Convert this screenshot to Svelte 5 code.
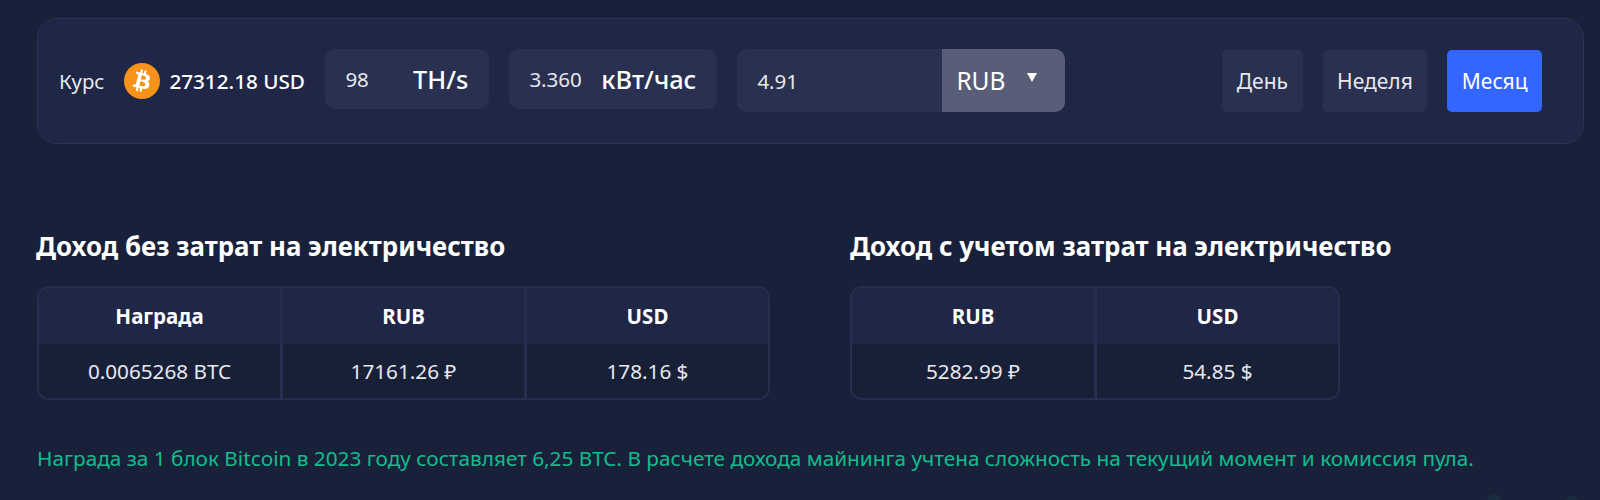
<script>
let period = 'Месяц';
const periods = ['День', 'Неделя', 'Месяц'];

const noPower = {
  heads: ['Награда', 'RUB', 'USD'],
  cells: ['0.0065268 BTC', '17161.26 ₽', '178.16 $'],
};
const withPower = {
  heads: ['RUB', 'USD'],
  cells: ['5282.99 ₽', '54.85 $'],
};
</script>

<main class="page">
  <section class="panel">
    <span class="rate-label">Курс</span>
    <svg class="btc" viewBox="0 0 24 24" aria-hidden="true">
      <circle cx="12" cy="12" r="12" fill="#f7931a" />
      <path
        fill="#fff"
        d="M17.23 10.29c.24-1.59-.974-2.45-2.64-3.03l.54-2.153-1.315-.33-.525 2.107c-.345-.087-.705-.167-1.064-.25l.526-2.127-1.32-.33-.54 2.165c-.285-.067-.565-.132-.84-.2l-1.815-.45-.35 1.407s.975.225.955.236c.535.136.63.486.615.766l-1.477 5.92c-.075.166-.24.406-.614.314.015.02-.96-.24-.96-.24l-.66 1.51 1.71.426.93.242-.54 2.19 1.32.327.54-2.17c.36.1.705.19 1.05.273l-.51 2.154 1.32.33.545-2.19c2.24.427 3.93.257 4.64-1.774.57-1.637-.03-2.58-1.217-3.196.854-.193 1.5-.76 1.68-1.93h.01zm-3.01 4.22c-.404 1.64-3.157.75-4.05.53l.72-2.9c.896.23 3.757.67 3.33 2.37zm.41-4.24c-.37 1.49-2.662.735-3.405.55l.654-2.64c.744.18 3.137.524 2.75 2.084v.006z"
      />
    </svg>
    <span class="rate-value">27312.18 USD</span>

    <div class="field hash">
      <span class="value">98</span>
      <span class="unit">TH/s</span>
    </div>
    <div class="field power">
      <span class="value">3.360</span>
      <span class="unit">кВт/час</span>
    </div>
    <div class="field price">
      <span class="value">4.91</span>
      <div class="currency">
        <span>RUB</span>
        <i class="caret"></i>
      </div>
    </div>

    <div class="periods">
      {#each periods as p}
        <button class="period" class:active={period === p} on:click={() => (period = p)}>{p}</button>
      {/each}
    </div>
  </section>

  <section class="results">
    <div class="result first">
      <h2>Доход без затрат на электричество</h2>
      <div class="table cols3">
        {#each noPower.heads as h, i}<div class="head" class:divided={i > 0}>{h}</div>{/each}
        {#each noPower.cells as c, i}<div class="cell" class:divided={i > 0}>{c}</div>{/each}
      </div>
    </div>
    <div class="result">
      <h2>Доход с учетом затрат на электричество</h2>
      <div class="table cols2">
        {#each withPower.heads as h, i}<div class="head" class:divided={i > 0}>{h}</div>{/each}
        {#each withPower.cells as c, i}<div class="cell" class:divided={i > 0}>{c}</div>{/each}
      </div>
    </div>
  </section>

  <p class="note">Награда за 1 блок Bitcoin в 2023 году составляет 6,25 BTC. В расчете дохода майнинга учтена сложность на текущий момент и комиссия пула.</p>
</main>

<!-- chat widget cut off by the bottom edge -->
<div class="widget">
  <span class="dot"></span>
  <span class="dot low"></span>
</div>

<style>
  :global(body) {
    background: #19213a;
  }

  .page {
    box-sizing: border-box;
    height: 500px;
    overflow: hidden;
    padding: 18px 16px 0 37px;
    font-family: "Noto Sans", "Open Sans", sans-serif;
    color: #fff;
  }

  .panel {
    box-sizing: border-box;
    height: 126px;
    display: flex;
    align-items: flex-start;
    padding: 30px 41px 0 21px;
    background: #1f2646;
    border: 1px solid #2b3452;
    border-radius: 20px;
  }

  .rate-label {
    margin-top: 20px;
    font-size: 20.4px;
    line-height: 24px;
    color: #e6e8ee;
  }

  .btc {
    width: 36px;
    height: 36px;
    margin: 14px 0 0 20px;
  }

  .rate-value {
    margin: 20px 0 0 9px;
    width: 156px;
    font-size: 20.7px;
    line-height: 24px;
    font-weight: 500;
    white-space: nowrap;
  }

  .field {
    box-sizing: border-box;
    height: 60px;
    display: flex;
    align-items: center;
    background: #2a3150;
    border-radius: 10px;
    margin-right: 20px;
  }

  .hash {
    width: 164px;
    padding: 0 21px 0 20px;
    justify-content: space-between;
  }

  .power {
    width: 208px;
    padding: 0 21px 0 20px;
    justify-content: space-between;
  }

  .price {
    width: 328px;
    height: 63px;
    padding-left: 20px;
    justify-content: space-between;
    margin-right: 0;
    overflow: hidden;
  }

  .value {
    font-size: 20.5px;
    color: #e6e8ee;
  }

  .unit {
    font-size: 25.4px;
    font-weight: 500;
  }

  .currency {
    width: 123px;
    height: 100%;
    display: flex;
    align-items: center;
    gap: 22px;
    padding-left: 14px;
    box-sizing: border-box;
    background: #585e78;
    font-size: 24.5px;
  }

  .caret {
    width: 0;
    height: 0;
    margin-top: -6px;
    border-left: 5px solid transparent;
    border-right: 5px solid transparent;
    border-top: 9px solid #fff;
  }

  .periods {
    display: flex;
    gap: 20px;
    margin-left: auto;
    margin-top: 1px;
  }

  .period {
    height: 62px;
    padding: 0 14.5px;
    border: 0;
    border-radius: 5px;
    background: #2a3150;
    color: #e6e8ee;
    font: 21px "Noto Sans", "Open Sans", sans-serif;
  }

  .period.active {
    background: #3366ff;
    color: #fff;
  }

  .results {
    display: flex;
    margin-top: 81px;
  }

  .result.first {
    width: 813px;
  }

  h2 {
    margin: 0 0 19px;
    font-size: 25.85px;
    line-height: 42px;
    font-weight: 700;
    white-space: nowrap;
  }

  .first h2 {
    margin-left: -1px;
  }

  .table {
    display: grid;
    grid-template-rows: 56px 54px;
    border: 2px solid #262f4e;
    border-radius: 12px;
    overflow: hidden;
    box-sizing: border-box;
    height: 114px;
  }

  .cols3 {
    width: 733px;
    grid-template-columns: 241px 244px 1fr;
  }

  .cols2 {
    width: 490px;
    grid-template-columns: 242px 1fr;
  }

  .head,
  .cell {
    display: flex;
    align-items: center;
    justify-content: center;
    font-size: 20.7px;
  }

  .divided {
    border-left: 3px solid #262f4e;
  }

  .head {
    background: #1f2646;
    font-weight: 700;
    font-size: 20.5px;
  }

  .cell {
    background: #182037;
    color: #e6e8ee;
  }

  .note {
    margin: 45px 0 0;
    font-size: 20.75px;
    line-height: 26px;
    white-space: nowrap;
    color: #12bd8c;
  }

  .widget {
    position: fixed;
    right: 21px;
    bottom: -6px;
    width: 92px;
    height: 12px;
    display: flex;
    justify-content: space-between;
  }

  .dot {
    width: 14px;
    height: 14px;
    border-radius: 50%;
    background: #1c2c3f;
  }

  .dot.low {
    margin-top: 2px;
  }
</style>
